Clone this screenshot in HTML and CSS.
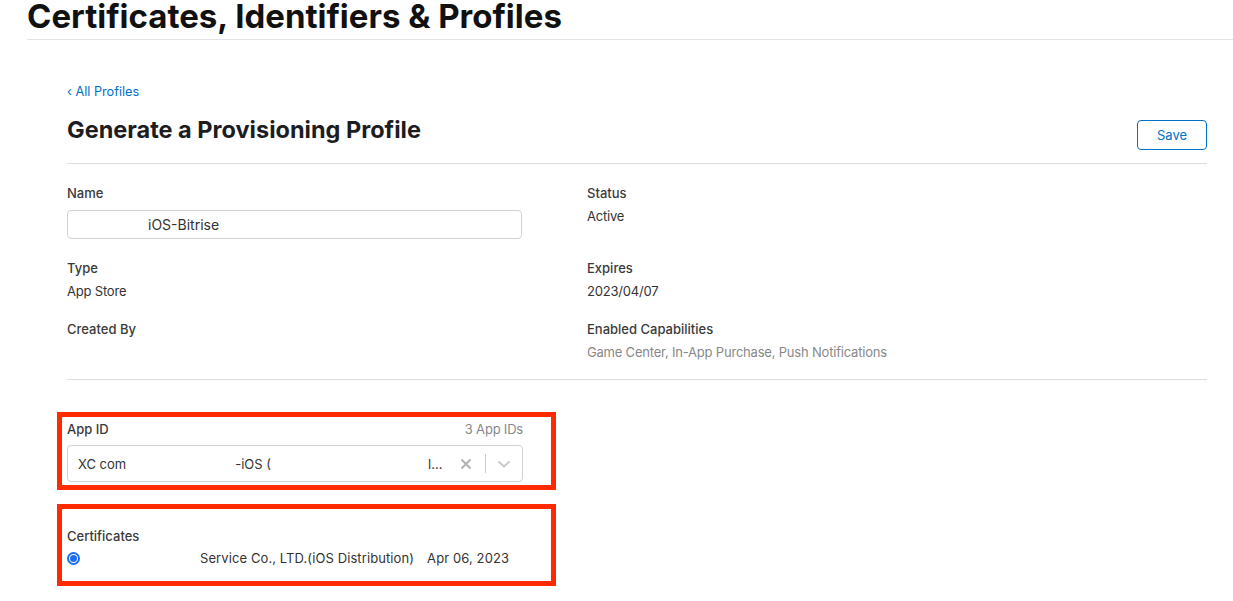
FILE: index.html
```html
<!DOCTYPE html>
<html lang="en">
<head>
<meta charset="utf-8">
<title>Certificates, Identifiers &amp; Profiles</title>
<link rel="stylesheet" href="styles.css">
</head>
<body>
<header class="page-header">
  <h1 class="page-title">Certificates, Identifiers &amp; Profiles</h1>
</header>
<main class="content">
  <a class="back-link" href="#">&lsaquo; All Profiles</a>
  <div class="title-row">
    <h2 class="section-title">Generate a Provisioning Profile</h2>
    <button class="btn-save" type="button">Save</button>
  </div>

  <section class="details">
    <div class="field">
      <div class="label">Name</div>
      <div class="text-input"><span class="redacted redacted-name"></span>iOS-Bitrise</div>
    </div>
    <div class="field">
      <div class="label">Status</div>
      <div class="value">Active</div>
    </div>
    <div class="field">
      <div class="label">Type</div>
      <div class="value">App Store</div>
    </div>
    <div class="field">
      <div class="label">Expires</div>
      <div class="value">2023/04/07</div>
    </div>
    <div class="field">
      <div class="label">Created By</div>
    </div>
    <div class="field">
      <div class="label">Enabled Capabilities</div>
      <div class="value muted">Game Center, In-App Purchase, Push Notifications</div>
    </div>
  </section>

  <div class="highlight highlight-appid">
    <div class="label-row">
      <span class="label">App ID</span>
      <span class="count">3 App IDs</span>
    </div>
    <div class="select">
      <div class="select-value">XC com<span class="redacted redacted-a"></span>-iOS (<span class="redacted redacted-b"></span>l...</div>
      <span class="select-clear">
        <svg width="12" height="12" viewBox="0 0 12 12"><path d="M1.5 1.5 L10.5 10.5 M10.5 1.5 L1.5 10.5" stroke="#b3b3b3" stroke-width="2" stroke-linecap="butt"/></svg>
      </span>
      <span class="select-sep"></span>
      <span class="select-arrow">
        <svg width="14" height="8" viewBox="0 0 14 8"><path d="M1.5 1.5 L7 6.5 L12.5 1.5" fill="none" stroke="#c8c8c8" stroke-width="1.8"/></svg>
      </span>
    </div>
  </div>

  <div class="highlight highlight-certs">
    <div class="label">Certificates</div>
    <label class="cert-row">
      <span class="radio"><span class="radio-dot"></span></span>
      <span class="redacted redacted-cert"></span>
      <span class="cert-name">Service Co., LTD.(iOS Distribution)</span>
      <span class="cert-date">Apr 06, 2023</span>
    </label>
  </div>
</main>
</body>
</html>
```

FILE: styles.css
```css
* { box-sizing: border-box; }

html, body {
  margin: 0;
  padding: 0;
  background: #ffffff;
}

body {
  font-family: Inter, "Noto Sans", "Liberation Sans", sans-serif;
  color: #333333;
  font-size: 13px;
}

.page-header {
  margin-left: 27px;
  padding-bottom: 6px;
  border-bottom: 1px solid #e3e3e3;
}

.page-title {
  margin: 0;
  font-size: 33px;
  line-height: 33px;
  font-weight: 700;
  color: #111111;
}

.content {
  padding: 0 26px 0 67px;
}

.back-link {
  display: block;
  margin-top: 44px;
  font-size: 12.7px;
  line-height: 16px;
  color: #0070c9;
  text-decoration: none;
}

.title-row {
  display: flex;
  justify-content: space-between;
  align-items: flex-start;
  margin-top: 16px;
  padding-bottom: 13px;
  border-bottom: 1px solid #dcdcdc;
}

.section-title {
  margin: 0;
  font-size: 23.5px;
  line-height: 28px;
  font-weight: 700;
  color: #1d1d1f;
}

.btn-save {
  margin-top: 4px;
  width: 70px;
  height: 30px;
  border: 1px solid #0070c9;
  border-radius: 4px;
  background: #ffffff;
  color: #0070c9;
  font-family: inherit;
  font-size: 13px;
  padding: 0;
}

.details {
  display: grid;
  grid-template-columns: 520px 1fr;
  row-gap: 20px;
  padding: 20px 0 18px;
  border-bottom: 1px solid #dcdcdc;
}

.label {
  font-size: 13px;
  line-height: 18px;
  font-weight: 500;
  color: #3a3a3a;
}

.value {
  margin-top: 5px;
  font-size: 13px;
  line-height: 18px;
  color: #333333;
  letter-spacing: -0.2px;
}

.value.muted {
  color: #888888;
}

.text-input {
  margin-top: 8px;
  width: 455px;
  height: 29px;
  border: 1px solid #d2d2d2;
  border-radius: 4px;
  display: flex;
  align-items: center;
  padding-left: 10px;
  font-size: 14px;
  color: #333333;
}

.redacted {
  display: inline-block;
  height: 1px;
}

.redacted-name { width: 70px; }
.redacted-a { width: 109px; }
.redacted-b { width: 157px; }
.redacted-cert { width: 120px; }

.highlight {
  border: 5px solid #ff2a00;
  margin-left: -10px;
  width: 499px;
  padding-left: 5px;
  padding-right: 28px;
}

.highlight-appid {
  margin-top: 32px;
  padding-top: 3px;
  padding-bottom: 3px;
}

.label-row {
  display: flex;
  justify-content: space-between;
  align-items: center;
}

.count {
  font-size: 13px;
  line-height: 18px;
  color: #888888;
  letter-spacing: -0.2px;
}

.select {
  margin-top: 7px;
  height: 37px;
  border: 1px solid #d2d2d2;
  border-radius: 4px;
  display: flex;
  align-items: center;
  padding-left: 10px;
}

.select-value {
  flex: 1;
  font-size: 13px;
  color: #333333;
  white-space: nowrap;
  overflow: hidden;
}

.select-clear {
  display: flex;
  width: 12px;
  margin-right: 13px;
}

.select-sep {
  width: 1px;
  height: 19px;
  background: #cccccc;
}

.select-arrow {
  display: flex;
  margin-left: 11px;
  margin-right: 11px;
}

.highlight-certs {
  margin-top: 14px;
  padding-top: 18px;
  padding-bottom: 14px;
}

.cert-row {
  margin-top: 4px;
  display: flex;
  align-items: center;
  height: 18px;
  font-size: 13px;
  color: #333333;
  letter-spacing: 0.1px;
}

.radio {
  width: 13px;
  height: 13px;
  border-radius: 50%;
  border: 2px solid #1a6ff0;
  background: #ffffff;
  display: flex;
  align-items: center;
  justify-content: center;
  flex: none;
}

.radio-dot {
  width: 7px;
  height: 7px;
  border-radius: 50%;
  background: #1a6ff0;
}

.cert-name {
  margin-right: 13px;
}

.cert-date {
  color: #333333;
}
```
